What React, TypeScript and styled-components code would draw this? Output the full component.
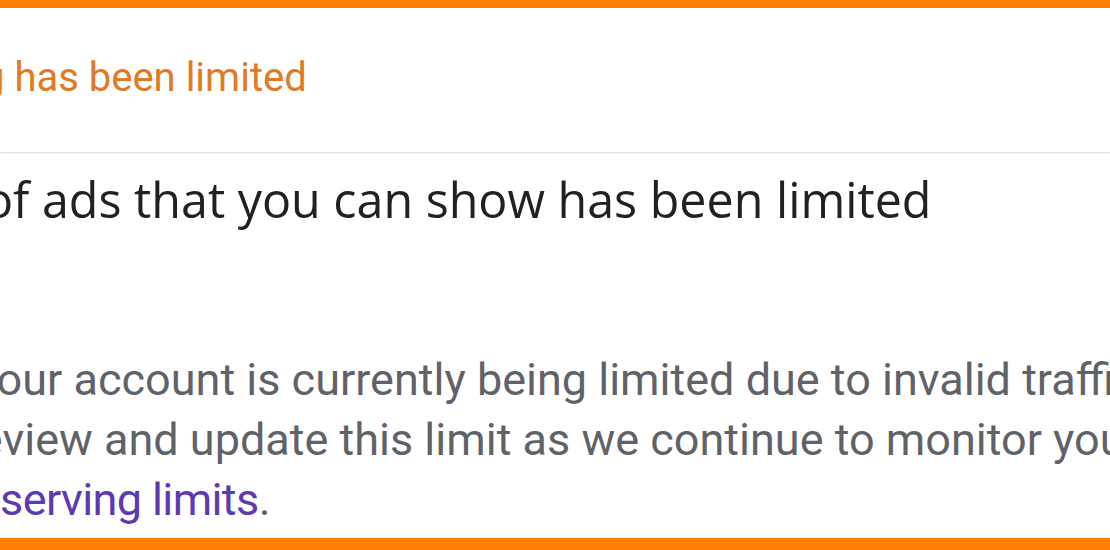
import React from 'react';
import styled, { createGlobalStyle } from 'styled-components';

const GlobalStyle = createGlobalStyle`
  html, body {
    margin: 0;
    padding: 0;
    background: #ffffff;
    overflow: hidden;
  }
`;

const Frame = styled.div`
  box-sizing: border-box;
  width: 1110px;
  height: 550px;
  border-top: 8px solid #ff8004;
  border-bottom: 12px solid #ff8004;
  display: flex;
  flex-direction: column;
  overflow: hidden;
  background: #ffffff;
`;

const Header = styled.header`
  height: 145px;
  flex: none;
  box-sizing: border-box;
  padding-top: 50px;
  border-bottom: 1px solid #e4e4e4;
  box-shadow: 0 1px 2px rgba(0, 0, 0, 0.05);
`;

// each visible line is the tail of a wider line; $cut hides its start
const Line = styled.div<{ $cut: number }>`
  white-space: nowrap;
  margin-left: ${(p) => -p.$cut}px;
`;

const Status = styled(Line)`
  font-family: Roboto, 'Liberation Sans', sans-serif;
  font-size: 40px;
  line-height: 40px;
  color: #e07a26;
`;

const Body = styled.section`
  flex: 1;
  display: flex;
  flex-direction: column;
  padding-top: 20px;
`;

const Title = styled(Line)`
  font-family: 'Open Sans', Roboto, sans-serif;
  font-size: 48.4px;
  line-height: 52px;
  color: #202124;
`;

const Paragraph = styled.div`
  margin-top: 125px;
  font-family: Roboto, 'Liberation Sans', sans-serif;
  font-size: 45px;
  line-height: 60px;
  color: #5f6368;
`;

const Link = styled.a`
  color: #5c3ab3;
  text-decoration: none;
  letter-spacing: -0.6px;
`;

export default function App() {
  return (
    <>
      <GlobalStyle />
      <Frame>
        <Header>
          <Status $cut={18}>g has been limited</Status>
        </Header>
        <Body>
          <Title $cut={16}>of ads that you can show has been limited</Title>
          <Paragraph>
            <Line $cut={29}>Your account is currently being limited due to invalid traffic concerns.</Line>
            <Line $cut={36}>review and update this limit as we continue to monitor your traffic.</Line>
            <Line $cut={61}>
              ad <Link href="#">serving limits</Link>.
            </Line>
          </Paragraph>
        </Body>
      </Frame>
    </>
  );
}
